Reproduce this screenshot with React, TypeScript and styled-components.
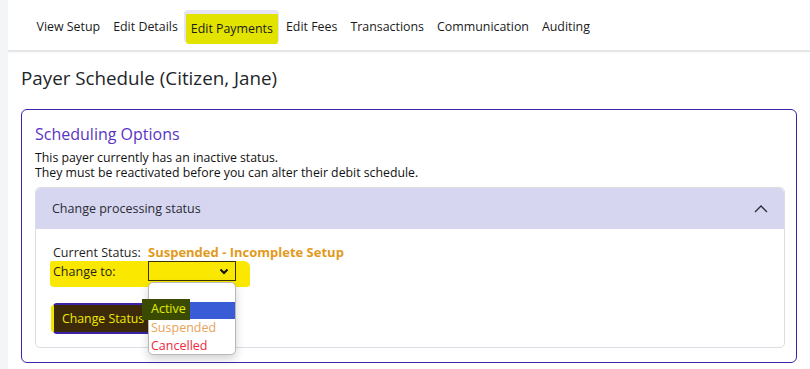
import styled, { createGlobalStyle } from 'styled-components';

const GlobalStyle = createGlobalStyle`
  html, body {
    margin: 0;
    padding: 0;
    background: #f4f5f7;
    font-family: "Open Sans", "Noto Sans", Arial, sans-serif;
    color: #212529;
  }
`;

const Shell = styled.div`
  display: flex;
  flex-direction: column;
  margin-left: 8px;
  height: 369px;
  overflow: hidden;
`;

const NavBar = styled.nav`
  display: flex;
  align-items: center;
  height: 50px;
  padding-left: 22px;
  background: #ffffff;
  box-shadow: 0 2px 2px rgba(0, 0, 0, 0.08);
  position: relative;
  z-index: 1;
`;

const Tab = styled.div<{ $active?: boolean }>`
  display: flex;
  align-items: center;
  height: 33px;
  padding: 0 6.5px;
  margin-top: 2px;
  border-radius: 4px;
  font-size: 12.4px;
  color: #1a1a1a;
  background: ${(p) => (p.$active ? '#e4e4f5' : 'transparent')};
`;

const TabMark = styled.span`
  display: inline-block;
  background: #e3e300;
  padding: 6px 5px 7px;
  margin: 6px -5px 0;
  border-radius: 1px 1px 2px 3px;
`;

const Main = styled.main`
  flex: 1;
  background: #ffffff;
  margin-top: 2px;
  padding: 14px 13px 0;
`;

const Heading = styled.h1`
  margin: 0 0 18px;
  font-size: 18.8px;
  font-weight: 500;
  line-height: 25px;
  color: #212529;
`;

const Card = styled.section`
  border: 1.5px solid #3a27a6;
  border-radius: 6px;
  padding: 13px 11px 14px 13px;
`;

const CardTitle = styled.h2`
  margin: 0 0 6px;
  font-size: 16px;
  font-weight: 500;
  line-height: 22px;
  color: #5a34c6;
`;

const Notice = styled.div`
  margin: 0 0 7px;
  font-size: 12.3px;
  color: #111;
`;

const NoticeLine = styled.div`
  height: 14.5px;
  line-height: 14.5px;
  overflow: visible;
  white-space: nowrap;
`;

const Accordion = styled.div`
  border: 1px solid #dcdce4;
  border-radius: 5px;
`;

const AccordionHeader = styled.div`
  display: flex;
  align-items: center;
  justify-content: space-between;
  height: 41px;
  padding: 0 16px;
  background: #d6d6f0;
  border-radius: 5px 5px 0 0;
  font-size: 12.5px;
  color: #2a2a33;
`;

const AccordionBody = styled.div`
  padding: 14px 17px 12px;
  height: 92px;
`;

const FieldGrid = styled.div`
  display: grid;
  grid-template-columns: 95px auto;
  align-items: center;
  font-size: 12.5px;
  color: #1f1f1f;
`;

const StatusValue = styled.span`
  font-weight: 700;
  color: #e29a1c;
  font-size: 13px;
`;

const HighlightRow = styled.div`
  grid-column: 1 / 3;
  display: grid;
  grid-template-columns: 95px auto;
  align-items: center;
  background: #fbe800;
  margin-left: -3px;
  padding: 0 14px 6px 3px;
  width: fit-content;
  border-radius: 2px 6px 3px 4px;
`;

const SelectWrap = styled.div`
  position: relative;
  width: 88px;
`;

const SelectBox = styled.div`
  display: flex;
  align-items: center;
  justify-content: flex-end;
  height: 18px;
  border: 1px solid #3a3300;
  padding-right: 6px;
`;

const OptionList = styled.ul`
  position: absolute;
  left: 0;
  top: 21px;
  width: 86px;
  margin: 0;
  padding: 1px 0 0;
  list-style: none;
  background: #fff;
  border: 1px solid #b8b8b8;
  border-radius: 5px;
  box-shadow: 0 4px 10px rgba(0, 0, 0, 0.18);
  z-index: 5;
`;

const OptionItem = styled.li<{ $color?: string; $selected?: boolean }>`
  height: 17.5px;
  line-height: 17.5px;
  padding-left: 2px;
  font-size: 12.5px;
  color: ${(p) => p.$color || '#111'};
  background: ${(p) => (p.$selected ? '#3a5bd6' : 'transparent')};
`;

const OptionMark = styled.span`
  display: inline-block;
  background: #3a4a00;
  color: #e2ee00;
  padding: 0 4px 0 9px;
  margin-left: -9px;
  height: 21px;
  line-height: 19px;
  margin-top: -3px;
  vertical-align: top;
`;

const ActionButton = styled.button`
  margin-top: 16px;
  height: 31px;
  width: 100px;
  padding: 2px 0;
  border: none;
  border-radius: 4px;
  background: #3b22a8;
  cursor: pointer;
  font-family: inherit;
`;

const ButtonMark = styled.span`
  display: flex;
  align-items: center;
  height: 27px;
  padding: 0 0 0 8px;
  margin-left: -2px;
  background: #3d2a08;
  border-left: 3px solid #f0e600;
  border-radius: 3px 6px 6px 3px;
  color: #f0ea00;
  font-size: 12.3px;
`;

const tabs = ['View Setup', 'Edit Details', 'Edit Payments', 'Edit Fees', 'Transactions', 'Communication', 'Auditing'];

export default function App() {
  return (
    <>
      <GlobalStyle />
      <Shell>
        <NavBar>
          {tabs.map((t) =>
            t === 'Edit Payments' ? (
              <Tab key={t} $active>
                <TabMark>{t}</TabMark>
              </Tab>
            ) : (
              <Tab key={t}>{t}</Tab>
            )
          )}
        </NavBar>
        <Main>
          <Heading>Payer Schedule (Citizen, Jane)</Heading>
          <Card>
            <CardTitle>Scheduling Options</CardTitle>
            <Notice>
              <NoticeLine>This payer currently has an inactive status.</NoticeLine>
              <NoticeLine>They must be reactivated before you can alter their debit schedule.</NoticeLine>
            </Notice>
            <Accordion>
              <AccordionHeader>
                <span>Change processing status</span>
                <svg width="14" height="9" viewBox="0 0 14 9">
                  <path d="M1 8 L7 2 L13 8" fill="none" stroke="#2b2b3a" strokeWidth="1.3" />
                </svg>
              </AccordionHeader>
              <AccordionBody>
                <FieldGrid>
                  <span>Current Status:</span>
                  <StatusValue>Suspended - Incomplete Setup</StatusValue>
                  <HighlightRow>
                    <span>Change to:</span>
                    <SelectWrap>
                      <SelectBox>
                        <svg width="10" height="7" viewBox="0 0 10 7">
                          <path d="M1.5 1.5 L5 5 L8.5 1.5" fill="none" stroke="#111" strokeWidth="2" />
                        </svg>
                      </SelectBox>
                      <OptionList>
                        <OptionItem>&nbsp;</OptionItem>
                        <OptionItem $selected>
                          <OptionMark>Active</OptionMark>
                        </OptionItem>
                        <OptionItem $color="#e8a35a">Suspended</OptionItem>
                        <OptionItem $color="#ee2a3a">Cancelled</OptionItem>
                      </OptionList>
                    </SelectWrap>
                  </HighlightRow>
                </FieldGrid>
                <ActionButton>
                  <ButtonMark>Change Status</ButtonMark>
                </ActionButton>
              </AccordionBody>
            </Accordion>
          </Card>
        </Main>
      </Shell>
    </>
  );
}
